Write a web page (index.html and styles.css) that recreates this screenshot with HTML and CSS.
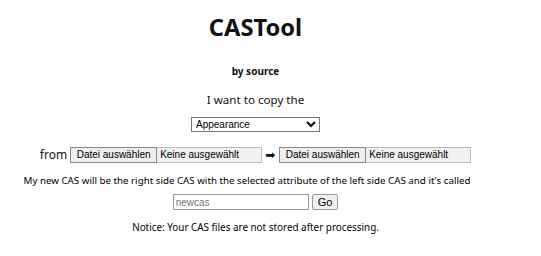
FILE: index.html
```html
<!DOCTYPE html>
<html lang="de">
<head>
    <meta charset="UTF-8">
    <meta name="viewport" content="width=device-width, initial-scale=1.0">
    <title>CASTool</title>
    <link rel="stylesheet" href="styles.css">
</head>
<body>
    <h1 class="title">CASTool</h1>
    <div class="byline">by source</div>
    <form class="tool">
        <p class="lead">I want to copy the</p>
        <select class="attr">
            <option>Appearance</option>
        </select>
        <div class="files">
            <span class="from">from</span>
            <label class="file">
                <span class="file-btn">Datei auswählen</span>
                <span class="file-name">Keine ausgewählt</span>
            </label>
            <span class="arrow">&#x27A1;</span>
            <label class="file">
                <span class="file-btn">Datei auswählen</span>
                <span class="file-name">Keine ausgewählt</span>
            </label>
        </div>
        <p class="desc">My new CAS will be the right side CAS with the selected attribute of the left side CAS and it's called</p>
        <div class="name-row">
            <input type="text" class="name" placeholder="newcas">
            <button type="submit" class="go">Go</button>
        </div>
        <p class="notice">Notice: Your CAS files are not stored after processing.</p>
    </form>
</body>
</html>
```

FILE: styles.css
```css
body {
    font-family: 'Noto Sans', sans-serif;
    margin: 0;
    padding: 0 30px 0 0;
    background: #fff;
    color: #111;
    text-align: center;
}
.title {
    font-size: 23.7px;
    font-weight: bold;
    margin: 12px 0 0;
    line-height: 30px;
}
.byline {
    font-size: 10px;
    font-weight: bold;
    line-height: 14px;
    margin-top: 22px;
}
.lead {
    font-size: 11.6px;
    line-height: 16px;
    margin: 14px 0 3px;
}
.attr {
    font-family: 'Liberation Sans', sans-serif;
    font-size: 10px;
    width: 129px;
    height: 15px;
    padding: 0;
    border: 1px solid #777;
    border-radius: 0;
    background: #fff;
    color: #000;
}
.files {
    display: flex;
    justify-content: center;
    align-items: center;
    margin-top: 13px;
}
.from {
    font-size: 12px;
    margin-right: 3px;
}
.file {
    display: flex;
    width: 190px;
    height: 14px;
    background: #f0f0f0;
    border: 1px solid #bbb;
    font-family: 'Liberation Sans', sans-serif;
    font-size: 10px;
    text-align: left;
    color: #000;
}
.file-btn {
    width: 85px;
    text-align: center;
    line-height: 14px;
    border: 1px solid #888;
    margin: -1px 0 -1px -1px;
    background: #efefef;
}
.file-name {
    padding: 0 3px;
    line-height: 14px;
}
.arrow {
    font-family: 'DejaVu Sans', sans-serif;
    font-size: 12px;
    margin: 0 4px 0 3px;
}
.desc {
    font-size: 9.75px;
    line-height: 14px;
    margin: 11px 0 6px;
    padding-right: 17px;
    color: #000;
}
.name-row {
    display: flex;
    justify-content: center;
    gap: 3px;
}
.name {
    font-family: 'Liberation Sans', sans-serif;
    font-size: 10px;
    width: 130px;
    height: 14px;
    padding: 0 2px;
    border: 1px solid #999;
    margin: 0;
}
.go {
    font-family: 'Liberation Sans', sans-serif;
    font-size: 11px;
    height: 16px;
    padding: 0 5px;
    margin: 0;
    border: 1px solid #999;
    border-radius: 2px;
    background: #f0f0f0;
    color: #000;
}
.notice {
    font-size: 9.9px;
    line-height: 14px;
    margin: 10px 0 0;
    color: #000;
}
```
